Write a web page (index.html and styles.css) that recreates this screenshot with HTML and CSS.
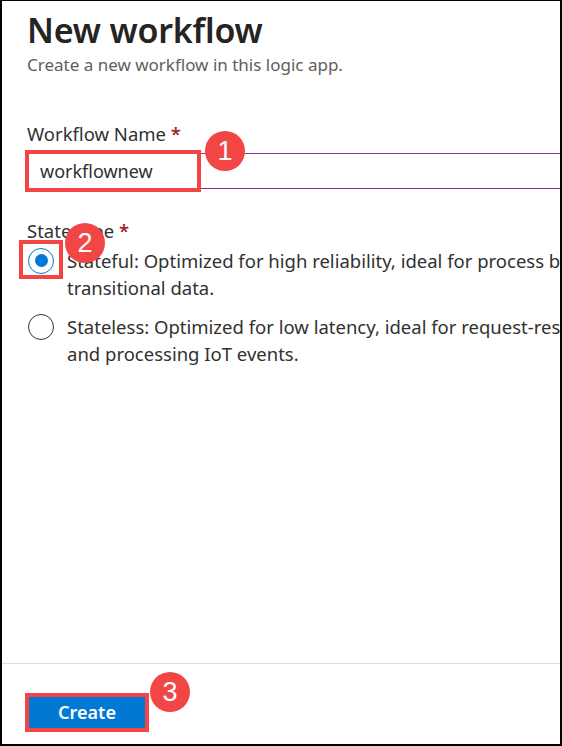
FILE: index.html
```html
<!DOCTYPE html>
<html lang="en">
<head>
<meta charset="utf-8">
<title>New workflow</title>
<link rel="stylesheet" href="styles.css">
</head>
<body>
<div class="frame">
  <div class="content">
    <h1 class="title">New workflow</h1>
    <p class="subtitle">Create a new workflow in this logic app.</p>

    <div class="field">
      <label class="label">Workflow Name <span class="req">*</span></label>
      <div class="input-wrap">
        <div class="input">workflownew</div>
        <span class="hl hl-input"></span>
        <span class="badge badge-1">1</span>
      </div>
    </div>

    <div class="field field-state">
      <label class="label">State type <span class="req">*</span></label>
      <span class="badge badge-2">2</span>
      <div class="radios">
        <div class="radio-row">
          <span class="radio-cell">
            <span class="radio checked"><span class="dot"></span></span>
            <span class="hl hl-radio"></span>
          </span>
          <span class="radio-text">
            <span class="line">Stateful: Optimized for high reliability, ideal for process business</span>
            <span class="line">transitional data.</span>
          </span>
        </div>
        <div class="radio-row">
          <span class="radio-cell">
            <span class="radio"></span>
          </span>
          <span class="radio-text">
            <span class="line">Stateless: Optimized for low latency, ideal for request-response</span>
            <span class="line">and processing IoT events.</span>
          </span>
        </div>
      </div>
    </div>
  </div>

  <div class="footer">
    <div class="btn-wrap">
      <button class="btn-primary">Create</button>
      <span class="badge badge-3">3</span>
    </div>
  </div>
</div>
</body>
</html>
```

FILE: styles.css
```css
* { box-sizing: border-box; }
html, body {
  margin: 0;
  padding: 0;
  background: #ffffff;
}
body {
  width: 562px;
  height: 746px;
  overflow: hidden;
  font-family: "Noto Sans", "Open Sans", sans-serif;
  color: #323130;
}
.frame {
  width: 562px;
  height: 746px;
  border-top: 1px solid #000;
  border-left: 2px solid #000;
  border-right: 2px solid #000;
  border-bottom: 2px solid #000;
  display: flex;
  flex-direction: column;
  overflow: hidden;
  background: #fff;
}
.content {
  flex: 1;
  padding: 6px 0 0 25px;
  position: relative;
}
.title {
  margin: 0;
  font-size: 34px;
  font-weight: 600;
  line-height: 46px;
  color: #252423;
  letter-spacing: -0.2px;
}
.subtitle {
  margin: 2px 0 0 0;
  font-size: 17px;
  line-height: 20px;
  color: #605e5c;
}
.field {
  margin-top: 47px;
  position: relative;
}
.label {
  display: block;
  font-size: 18.5px;
  line-height: 24px;
  color: #323130;
}
.req {
  color: #a4262c;
  font-weight: 600;
}
.input-wrap {
  position: relative;
  margin-top: 7px;
  width: 600px;
}
.input {
  height: 36px;
  border-top: 1px solid #8f34ae;
  border-bottom: 1px solid #7a2a92;
  border-left: 1px solid #8f34ae;
  padding: 0 12px;
  font-size: 18px;
  line-height: 34px;
  color: #323130;
}
.hl {
  position: absolute;
  border: 4px solid #f44545;
  pointer-events: none;
}
.hl-input {
  left: -2px;
  top: -3px;
  width: 176px;
  height: 42px;
}
.badge {
  position: absolute;
  width: 40px;
  height: 40px;
  border-radius: 50%;
  background: #f24646;
  color: #fff;
  font-family: "Liberation Sans", Arial, sans-serif;
  font-size: 27px;
  line-height: 40px;
  text-align: center;
}
.badge-1 {
  left: 178px;
  top: -22px;
}
.field-state {
  margin-top: 30px;
}
.badge-2 {
  left: 38px;
  top: 4px;
}
.radios {
  margin-top: 4px;
  display: flex;
  flex-direction: column;
  gap: 12px;
}
.radio-row {
  display: flex;
  align-items: flex-start;
}
.radio-cell {
  position: relative;
  width: 40px;
  height: 27px;
  flex: none;
  display: flex;
  align-items: center;
  padding-left: 1px;
}
.radio {
  width: 26px;
  height: 26px;
  border-radius: 50%;
  border: 1px solid #323130;
  display: flex;
  align-items: center;
  justify-content: center;
  background: #fff;
}
.radio.checked {
  border-color: #0078d4;
}
.dot {
  width: 13px;
  height: 13px;
  border-radius: 50%;
  background: #0078d4;
}
.hl-radio {
  left: -8px;
  top: -7px;
  width: 44px;
  height: 39px;
}
.radio-text {
  display: flex;
  flex-direction: column;
  font-size: 18.5px;
  line-height: 27px;
  color: #323130;
  white-space: nowrap;
}
.line { display: block; }
.footer {
  flex: none;
  height: 81px;
  border-top: 1px solid #e1dfdd;
  padding: 29px 0 0 23px;
}
.btn-wrap {
  position: relative;
  display: inline-block;
  border: 4px solid #f44545;
}
.btn-primary {
  display: block;
  width: 116px;
  height: 31px;
  border: 0;
  margin: 0;
  padding: 0;
  background: #0078d4;
  color: #fff;
  font-family: "Noto Sans", "Open Sans", sans-serif;
  font-weight: 600;
  font-size: 18px;
  line-height: 31px;
}
.badge-3 {
  left: 121px;
  top: -25px;
}
```
